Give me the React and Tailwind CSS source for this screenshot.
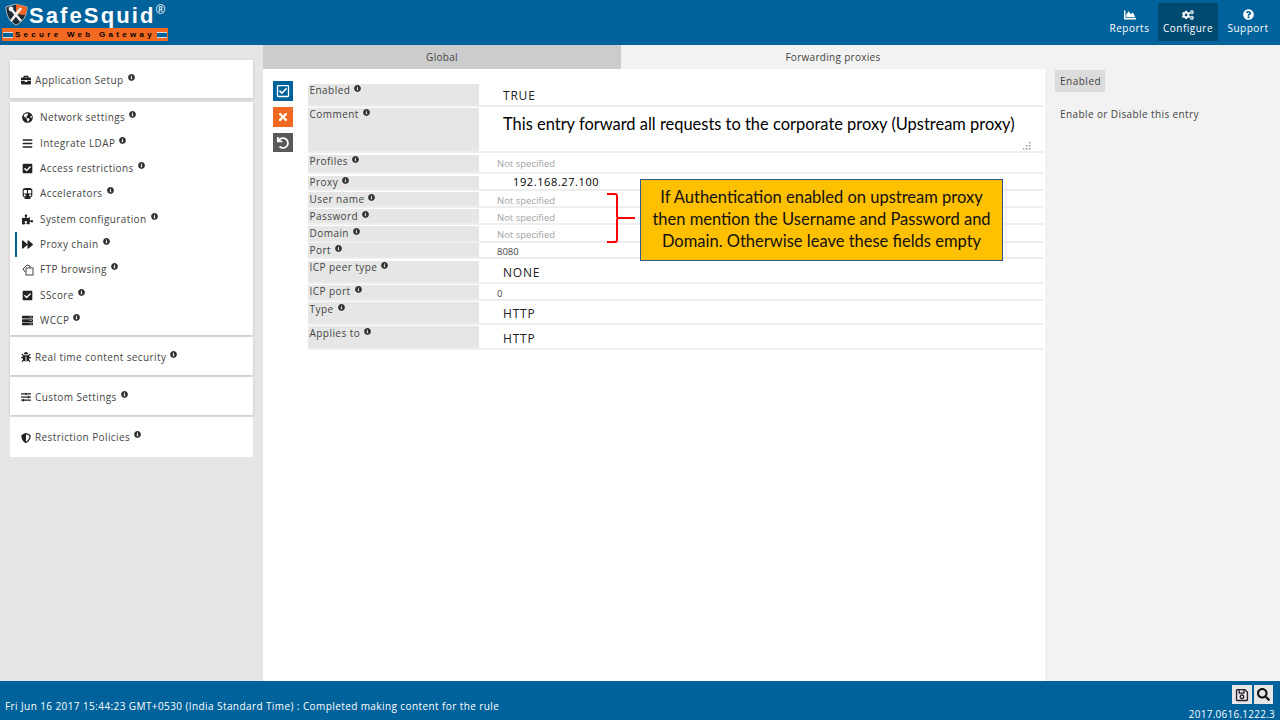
import React from 'react';
import {
  FaBriefcase, FaGlobeAmericas, FaBars, FaCheckSquare, FaSubway, FaPuzzlePiece, FaForward,
  FaServer, FaBug, FaSlidersH, FaShieldAlt, FaInfoCircle, FaChartArea, FaCogs, FaQuestionCircle,
  FaRegSave, FaSearch, FaRegCheckSquare, FaTimes, FaUndo,
} from 'react-icons/fa';

const Info = () => <FaInfoCircle className="inline-block text-[7px] text-[#333] ml-[4px] relative -top-[3px]" />;

// tilted sheet behind a square, the font icon used for FTP browsing
const FtpIcon = ({ className }) => (
  <svg className={className} width="12" height="12" viewBox="0 0 12 12" fill="none" stroke="#444" strokeWidth="1">
    <path d="M1 5 L5 1 L8 2 L8 4 M3 8 L1 5" />
    <rect x="4" y="4" width="7" height="7" />
  </svg>
);

const setupItems = [
  { label: 'Network settings', icon: FaGlobeAmericas },
  { label: 'Integrate LDAP', icon: FaBars },
  { label: 'Access restrictions', icon: FaCheckSquare },
  { label: 'Accelerators', icon: FaSubway },
  { label: 'System configuration', icon: FaPuzzlePiece },
  { label: 'Proxy chain', icon: FaForward, active: true },
  { label: 'FTP browsing', icon: FtpIcon },
  { label: 'SScore', icon: FaCheckSquare },
  { label: 'WCCP', icon: FaServer },
];

const rows = [
  { label: 'Enabled', h: 'h-[21px]', gap: 'mb-[1px]', value: 'TRUE', kind: 'select' },
  { label: 'Comment', h: 'h-[43px]', gap: 'mb-[2px]', value: 'This entry forward all requests to the corporate proxy (Upstream proxy)', kind: 'comment' },
  { label: 'Profiles', h: 'h-[17px]', gap: 'mb-[2px]', value: 'Not specified', kind: 'empty' },
  { label: 'Proxy', h: 'h-[13px]', gap: 'mb-[1px]', value: '192.168.27.100', kind: 'proxy' },
  { label: 'User name', h: 'h-[14px]', gap: 'mb-[1px]', value: 'Not specified', kind: 'empty', low: true },
  { label: 'Password', h: 'h-[14px]', gap: 'mb-[1px]', value: 'Not specified', kind: 'empty', low: true },
  { label: 'Domain', h: 'h-[15px]', gap: 'mb-0', value: 'Not specified', kind: 'empty', low: true },
  { label: 'Port', h: 'h-[14px]', gap: 'mb-[2px]', value: '8080', kind: 'plain', low: true },
  { label: 'ICP peer type', h: 'h-[21px]', gap: 'mb-[1px]', value: 'NONE', kind: 'select' },
  { label: 'ICP port', h: 'h-[14px]', gap: 'mb-[1px]', value: '0', kind: 'plain' },
  { label: 'Type', h: 'h-[21px]', gap: 'mb-[1px]', value: 'HTTP', kind: 'select', low: true },
  { label: 'Applies to', h: 'h-[22px]', gap: 'mb-[1px]', value: 'HTTP', kind: 'selectLow', low: true },
];

const SideGroup = ({ icon: Icon, label }) => (
  <div className="bg-white h-[38px] mb-[2px] pt-[2px] shadow-[0_1px_3px_rgba(0,0,0,0.15)] flex items-center pl-[11px] text-[10px] tracking-[0.4px] text-[#444]">
    <Icon className="text-[10px] text-[#222] mr-[4px]" />
    {label}
    <Info />
  </div>
);

const Value = ({ row }) => {
  if (row.kind === 'comment') {
    return (
      <div className="relative h-full">
        <div className="pl-[24px] pt-[4px] text-[16.45px] leading-[24px] text-black font-['Lato',sans-serif]">{row.value}</div>
        <svg className="absolute right-[12px] bottom-[1px]" width="8" height="8" viewBox="0 0 8 8">
          <g fill="#999">
            <rect x="6" y="0" width="1.5" height="1.5" />
            <rect x="3" y="3" width="1.5" height="1.5" />
            <rect x="6" y="3" width="1.5" height="1.5" />
            <rect x="0" y="6" width="1.5" height="1.5" />
            <rect x="3" y="6" width="1.5" height="1.5" />
            <rect x="6" y="6" width="1.5" height="1.5" />
          </g>
        </svg>
      </div>
    );
  }
  if (row.kind === 'select') return <div className="pl-[24px] pt-[3px] text-[12px] leading-[18px] tracking-[0.8px] text-[#222]">{row.value}</div>;
  if (row.kind === 'selectLow') return <div className="pl-[24px] pt-[4px] text-[12px] leading-[18px] tracking-[0.8px] text-[#222]">{row.value}</div>;
  if (row.kind === 'proxy') return <div className="pl-[34px] text-[11px] leading-[11px] tracking-[0.6px] text-black">{row.value}</div>;
  if (row.kind === 'empty') return <div className="pl-[18px] pt-[2px] text-[9.5px] leading-[14px] text-[#a3a3a3]">{row.value}</div>;
  return <div className="pl-[18px] pt-[2px] text-[9.5px] leading-[14px] text-[#444]">{row.value}</div>;
};

export default function App() {
  return (
    <div className="relative w-[1280px] h-[720px] overflow-hidden flex flex-col font-['Open_Sans',sans-serif] bg-white">
      {/* Header */}
      <header className="h-[45px] bg-[#00629b] flex justify-between shrink-0">
        <div className="pl-[2px] pt-[3px] w-[170px]">
          <div className="flex items-start h-[25px]">
            <svg width="24" height="23" viewBox="0 0 24 23" className="shrink-0 ml-[3px]">
              <path d="M1 4 L11 1 L22 4 C22 13 18 19 11 22 C5 19 1 13 1 4 Z" fill="#1d2a33" stroke="#d8d8d8" strokeWidth="0.8" />
              <path d="M11 1 L22 4 C22 8 21 10 20 12 L11 11 Z" fill="#f26522" />
              <path d="M6 18 L16 5 M6 6 L16 18" stroke="#f0f0f0" strokeWidth="2.6" />
              <circle cx="6" cy="6" r="2.4" fill="#f0f0f0" />
            </svg>
            <span className="text-[22px] leading-[25px] font-bold tracking-[2.1px] text-white font-['Liberation_Sans',sans-serif]">SafeSquid</span>
            <span className="text-[12px] leading-[14px] text-white">®</span>
          </div>
          <div className="h-[13px] w-[166px] bg-[#f26a21] flex items-center justify-between px-[1px]">
            <span className="w-[10px] h-[6px] bg-[#00629b] border-y border-[#cfe0ea]" />
            <span className="text-[8px] leading-[13px] font-bold tracking-[3.3px] text-black font-['Liberation_Sans',sans-serif]">Secure Web Gateway</span>
            <span className="w-[10px] h-[6px] bg-[#00629b] border-y border-[#cfe0ea]" />
          </div>
        </div>
        <nav className="flex pt-[3px] pr-[2px] text-white text-[10px] leading-[13px] tracking-[0.5px]">
          <div className="w-[60px] h-[38px] pl-[3px] flex flex-col items-center pt-[6px]">
            <FaChartArea className="text-[12px] mb-[1px]" />
            Reports
          </div>
          <div className="w-[60px] h-[38px] bg-[#004a70] flex flex-col items-center pt-[6px]">
            <FaCogs className="text-[12px] mb-[1px]" />
            Configure
          </div>
          <div className="w-[60px] h-[38px] flex flex-col items-center pt-[6px]">
            <FaQuestionCircle className="text-[11px] mb-[2px]" />
            Support
          </div>
        </nav>
      </header>

      <div className="flex flex-1 min-h-0">
        {/* Sidebar */}
        <aside className="w-[263px] bg-[#e6e6e6] px-[10px] pt-[15px] shrink-0">
          <SideGroup icon={FaBriefcase} label="Application Setup" />
          <div className="bg-white mt-[4px] pt-[3px] pb-[2px] mb-[2px] shadow-[0_1px_3px_rgba(0,0,0,0.15)]">
            {setupItems.map((item) => (
              <div key={item.label} className="relative h-[25.375px] flex items-center pl-[12px] text-[10px] tracking-[0.4px] text-[#444]">
                {item.active && <span className="absolute left-[5px] top-0 w-[2px] h-[25px] bg-[#00629b]" />}
                <span className="w-[18px] flex justify-start"><item.icon className="text-[11px] text-[#222]" /></span>
                {item.label}
                <Info />
              </div>
            ))}
          </div>
          <SideGroup icon={FaBug} label="Real time content security" />
          <SideGroup icon={FaSlidersH} label="Custom Settings" />
          <div className="bg-white h-[40px] pt-[1px] flex items-center pl-[11px] text-[10px] tracking-[0.4px] text-[#444]">
            <FaShieldAlt className="text-[10px] text-[#222] mr-[4px]" />
            Restriction Policies
            <Info />
          </div>
        </aside>

        {/* Main */}
        <main className="w-[782px] flex flex-col shrink-0">
          <div className="flex h-[24px] text-[10px] tracking-[0.3px] text-[#444] leading-[24px] text-center">
            <div className="w-[358px] bg-[#cccccc]">Global</div>
            <div className="flex-1 bg-[#f2f2f2]">Forwarding proxies</div>
          </div>
          <div className="flex">
            <div className="w-[45px] pl-[10px] pt-[12px] flex flex-col gap-[6px]">
              <button className="w-[20px] h-[20px] bg-[#00629b] flex items-center justify-center text-white text-[14px]"><FaRegCheckSquare /></button>
              <button className="w-[20px] h-[20px] bg-[#f26a21] flex items-center justify-center text-white text-[12px]"><FaTimes /></button>
              <button className="w-[20px] h-[19px] bg-[#58595b] flex items-center justify-center text-white text-[12px]"><FaUndo /></button>
            </div>
            <div className="w-[735px] pt-[15px]">
              {rows.map((row) => (
                <div key={row.label} className={`flex border-b-2 border-[#eeeeee] ${row.gap}`}>
                  <div className={`w-[171px] ${row.h} ${row.low ? 'pt-[1px]' : ''} bg-[#e6e6e6] pl-[1.5px] text-[10px] leading-[13px] tracking-[0.45px] text-[#444] shrink-0`}>
                    {row.label}
                    <Info />
                  </div>
                  <div className={`flex-1 min-w-0 ${row.h}`}><Value row={row} /></div>
                </div>
              ))}
            </div>
          </div>
        </main>

        {/* Help panel */}
        <aside className="flex-1 bg-[#f2f2f2] pl-[10px] pt-[25px]">
          <div className="w-[50px] h-[22px] pl-[5px] bg-[#dcdcdc] text-[10px] leading-[22px] tracking-[0.5px] text-[#444]">Enabled</div>
          <p className="mt-[15px] pl-[5px] text-[10px] leading-[14px] tracking-[0.4px] text-[#444]">Enable or Disable this entry</p>
        </aside>
      </div>

      {/* Footer */}
      <footer className="h-[39px] bg-[#00629b] shrink-0 flex justify-between text-white text-[10px]">
        <div className="pl-[5px] pt-[18px] leading-[14px] tracking-[0.41px]">Fri Jun 16 2017 15:44:23 GMT+0530 (India Standard Time) : Completed making content for the rule</div>
        <div className="flex flex-col items-end pr-[5px] pt-[4px]">
          <div className="flex gap-[2px] mr-[2px]">
            <span className="w-[20px] h-[19px] bg-[#e6e6e6] flex items-center justify-center text-[#2a1a2e] text-[14px]"><FaRegSave /></span>
            <span className="w-[19px] h-[19px] bg-[#e6e6e6] flex items-center justify-center text-[#111] text-[13px]"><FaSearch /></span>
          </div>
          <div className="mt-[5px] leading-[10px] tracking-[0.25px]">2017.0616.1222.3</div>
        </div>
      </footer>

      {/* Annotation added over the screenshot */}
      <div className="absolute left-[640px] top-[179px] w-[363px] h-[82px] pb-[2px] bg-[#ffc000] border border-[#2f5597] flex items-center justify-center text-center text-[16.5px] leading-[22px] text-[#111] font-['Lato',sans-serif]">
        <div>If Authentication enabled on upstream proxy<br />then mention the Username and Password and<br />Domain. Otherwise leave these fields empty</div>
      </div>
      <svg className="absolute left-[604px] top-[192px]" width="34" height="52" viewBox="0 0 34 52" fill="none" stroke="#ff0000" strokeWidth="2">
        <path d="M3 2 H11 Q13 2 13 4 V24 Q13 26 15 26 H31 M15 26 Q13 26 13 28 V48 Q13 50 11 50 H3" />
      </svg>
    </div>
  );
}
